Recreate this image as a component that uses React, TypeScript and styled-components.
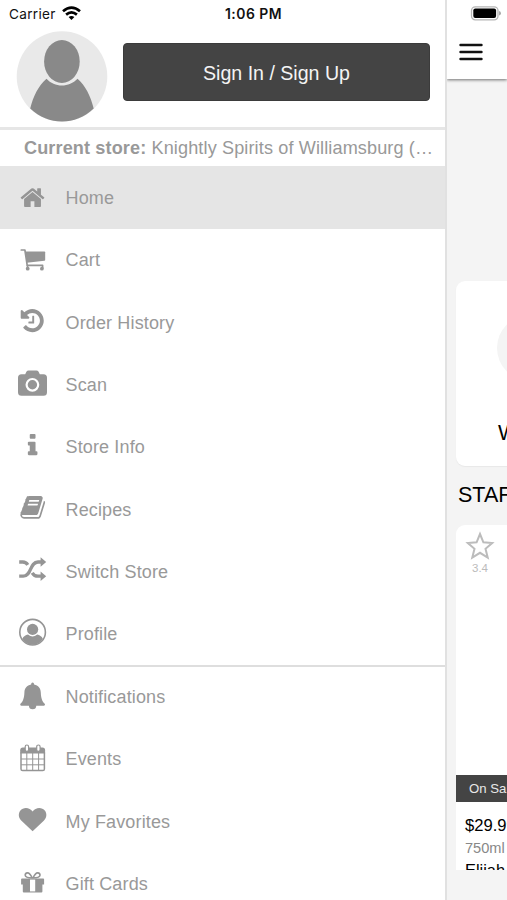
import React from "react";
import styled, { createGlobalStyle } from "styled-components";

const GlobalStyle = createGlobalStyle`
  * { box-sizing: border-box; }
  body { margin: 0; background: #fff; overflow: hidden; }
`;

const Screen = styled.div`
  width: 507px;
  height: 900px;
  display: grid;
  grid-template-columns: 445px 62px;
  overflow: hidden;
  font-family: "Liberation Sans", Arial, sans-serif;
`;

const Drawer = styled.aside`
  display: flex;
  flex-direction: column;
  height: 900px;
  overflow: hidden;
  background: #fff;
`;

const StatusBar = styled.div`
  display: grid;
  grid-template-columns: 216px 1fr;
  align-items: center;
  height: 27px;
  padding-left: 9px;
  flex: none;
  font-family: Inter, sans-serif;
  color: #111;
`;

const Carrier = styled.div`
  display: flex;
  align-items: center;
  gap: 6px;
  font-size: 13.6px;
  letter-spacing: 0.3px;
`;

const Clock = styled.div`
  font-size: 13.9px;
  font-weight: 600;
  letter-spacing: 0.5px;
`;

const Account = styled.div`
  display: flex;
  height: 100px;
  flex: none;
  padding: 4px 15px 0 16px;
  gap: 15px;
`;

const SignIn = styled.button`
  width: 307px;
  height: 58px;
  margin-top: 12px;
  padding: 2px 0 0;
  border: 1px solid #3b3b3b;
  border-radius: 4px;
  background: #444;
  color: #f4f4f4;
  font: 19.6px "Liberation Sans", Arial, sans-serif;
`;

const Store = styled.div`
  height: 39px;
  flex: none;
  border-top: 3px solid #e6e6e6;
  padding: 0 8px 0 24px;
  line-height: 36px;
  font-size: 18.1px;
  letter-spacing: 0.12px;
  color: #999;
  white-space: nowrap;
  overflow: hidden;
`;

const Menu = styled.nav<{ $divided?: boolean }>`
  display: flex;
  flex-direction: column;
  flex: none;
  border-top: ${(p) => (p.$divided ? "2px solid #dedede" : "none")};
  & > :first-child {
    margin-top: ${(p) => (p.$divided ? "-1.4px" : "0")};
  }
`;

const MenuRow = styled.a<{ $active?: boolean }>`
  display: flex;
  align-items: center;
  height: ${(p) => (p.$active ? "63px" : "62.3px")};
  padding-left: 16px;
  gap: 17.5px;
  font-size: 18px;
  letter-spacing: 0.14px;
  color: #999;
  background: ${(p) => (p.$active ? "#e5e5e5" : "transparent")};
`;

const Label = styled.span`
  padding-top: 1.6px;
`;

const Icon = styled.svg`
  width: 32px;
  height: 32px;
  flex: none;
  fill: #959595;
`;

const Page = styled.main`
  height: 900px;
  overflow: hidden;
  background: #f4f4f4;
  border-left: 2px solid #e1e1e1;
  white-space: nowrap;
  color: #111;
`;

const TopBar = styled.header`
  height: 79px;
  background: #fff;
  box-shadow: 0 1px 3px rgba(0, 0, 0, 0.55);
  display: flex;
  flex-direction: column;
  align-items: flex-start;
`;

const BatteryIcon = styled.svg`
  width: 31px;
  height: 15px;
  margin: 6px 0 0 23px;
`;

const MenuIcon = styled.svg`
  width: 24px;
  height: 18px;
  margin: 22px 0 0 12px;
`;

const Tile = styled.section`
  width: 110px;
  height: 185px;
  margin: 202px 0 0 9px;
  padding: 34px 0 0 41px;
  background: #fff;
  border-radius: 9px;
  box-shadow: 0 1px 1px #e8e8e8;
`;

const TileCircle = styled.div`
  width: 66px;
  height: 66px;
  border-radius: 50%;
  background: #f4f4f4;
`;

const TileLabel = styled.div`
  margin-top: 40px;
  padding-left: 1px;
  font-size: 21.5px;
  line-height: 24px;
  color: #000;
`;

const Heading = styled.h2`
  margin: 16px 0 0 11px;
  font-size: 21.5px;
  line-height: 26px;
  font-weight: 400;
  color: #000;
`;

const Product = styled.article`
  width: 180px;
  height: 345px;
  margin: 17px 0 0 9px;
  overflow: hidden;
  background: #fff;
  border-radius: 9px 9px 0 0;
  display: flex;
  flex-direction: column;
`;

const Rating = styled.div`
  width: 30px;
  height: 250px;
  flex: none;
  margin-left: 9px;
  padding-top: 6px;
  text-align: center;
  font-size: 11.5px;
  line-height: 14px;
  color: #bbb;
  svg { display: block; }
`;

const Badge = styled.div`
  height: 27px;
  flex: none;
  padding-left: 13px;
  background: #444;
  color: #e8e8e8;
  font-size: 13.2px;
  line-height: 28px;
`;

const Details = styled.div`
  flex: none;
  padding: 13px 0 0 9px;
`;

const Price = styled.div`
  font-size: 16.6px;
  line-height: 22px;
  color: #000;
`;

const Volume = styled.div`
  font-size: 14.6px;
  line-height: 23px;
  color: #888;
`;

const Name = styled.div`
  font-size: 16.4px;
  line-height: 20px;
  color: #000;
`;

const HomeGlyph = () => (
  <path transform="translate(3.4 2.5) scale(.01464)" d="M1472 992v480q0 26-19 45t-45 19h-384v-384h-256v384h-384q-26 0-45-19t-19-45v-480q0-1 .5-3t.5-3l575-474 575 474q1 2 1 6zm223-69l-62 74q-8 9-21 11h-3q-13 0-21-7l-692-577-692 577q-12 8-24 7-13-2-21-11l-62-74q-8-10-7-23.5t11-21.5l719-599q32-26 76-26t76 26l244 204v-195q0-14 9-23t23-9h192q14 0 23 9t9 23v408l219 182q10 8 11 21.5t-7 23.5z" />
);

const CartGlyph = () => (
  <>
    <path d="M9.3 7.4H28.4q.8 0 .8.8V15.8q0 .8-.8.9L10.8 18.8Z" />
    <path d="M5.3 6H8.9L11.2 21.3H26.6V24" fill="none" stroke="#959595" strokeWidth="1.7" strokeLinecap="round" strokeLinejoin="round" />
    <path d="M11.5 21V24" fill="none" stroke="#959595" strokeWidth="1.7" />
    <circle cx="11.7" cy="24.7" r="1.9" />
    <circle cx="25.9" cy="24.7" r="1.9" />
  </>
);

const HistoryGlyph = () => (
  <path transform="translate(2.8 1.2) scale(.015)" d="M1664 896q0 156-61 298t-164 245-245 164-298 61q-172 0-327-72.5t-264-204.5q-7-10-6.5-22.5t8.5-20.5l137-138q10-9 25-9 16 2 23 12 73 95 179 147t225 52q104 0 198.5-40.5t163.5-109.5 109.5-163.5 40.5-198.5-40.5-198.5-109.5-163.5-163.5-109.5-198.5-40.5q-98 0-188 35.5t-160 101.5l137 138q31 30 14 69-17 40-59 40h-448q-26 0-45-19t-19-45v-448q0-42 40-59 39-17 69 14l130 129q107-101 244.5-156.5t284.5-55.5q156 0 298 61t245 164 164 245 61 298zm-640-288v448q0 14-9 23t-23 9h-320q-14 0-23-9t-9-23v-64q0-14 9-23t23-9h224v-352q0-14 9-23t23-9h64q14 0 23 9t9 23z" />
);

const CameraGlyph = () => (
  <>
    <path d="M5.5 5.2H9.2L10.4 2.8Q11.1 1.4 12.7 1.4H20.3Q21.9 1.4 22.6 2.8L23.8 5.2H27.5Q31 5.2 31 8.7V23.2Q31 26.7 27.5 26.7H5.5Q2 26.7 2 23.2V8.7Q2 5.2 5.5 5.2Z" />
    <circle cx="16.4" cy="15.8" r="5.8" fill="none" stroke="#fff" strokeWidth="2.2" />
  </>
);

const InfoGlyph = () => (
  <path transform="translate(3.2 1.1) scale(.015)" d="M1216 1344v128q0 26-19 45t-45 19h-512q-26 0-45-19t-19-45v-128q0-26 19-45t45-19h64v-384h-64q-26 0-45-19t-19-45v-128q0-26 19-45t45-19h384q26 0 45 19t19 45v576h64q26 0 45 19t19 45zm-128-1152v192q0 26-19 45t-45 19h-256q-26 0-45-19t-19-45v-192q0-26 19-45t45-19h256q26 0 45 19t19 45z" />
);

const BookGlyph = () => (
  <path transform="translate(3.4 1.2) scale(.01485 .0148)" d="M1703 478q40 57 18 129l-275 906q-19 64-76.5 107.5t-122.5 43.5h-923q-77 0-148.5-53.5t-99.5-131.5q-24-67-2-127 0-4 3-27t4-37q1-8-3-21.5t-3-19.5q2-11 8-21t16.5-23.5 16.5-23.5q23-38 45-91.5t30-91.5q3-10 .5-30t-.5-28q3-11 17-28t17-23q21-36 42-92t25-90q1-9-2.5-32t.5-28q4-13 22-30.5t22-22.5q19-26 42.5-84.5t27.5-96.5q1-8-3-25.5t-2-26.5q2-8 9-18t18-23 17-21q8-12 16.5-30.5t15-35 16-36 19.5-32 26.5-23.5 36-11.5 47.5 5.5l-1 3q38-9 51-9h761q74 0 114 56t18 130l-274 906q-36 119-71.5 153.5t-128.5 34.5h-869q-27 0-38 15-11 16-1 43 24 70 144 70h923q29 0 56-15.5t35-41.5l300-987q7-22 5-57 38 15 59 43zm-1064 2q-4 13 2 22.5t20 9.5h608q13 0 25.5-9.5t16.5-22.5l21-64q4-13-2-22.5t-20-9.5h-608q-13 0-25.5 9.5t-16.5 22.5zm-83 256q-4 13 2 22.5t20 9.5h608q13 0 25.5-9.5t16.5-22.5l21-64q4-13-2-22.5t-20-9.5h-608q-13 0-25.5 9.5t-16.5 22.5z" />
);

const ShuffleGlyph = () => (
  <>
    <path d="M3.2 20.2H7.2C15.8 20.2 13.4 6 22 6H25.5M3.2 6H6.8Q10 6 11.8 8.9M16.2 16.8Q18.2 20.2 22 20.2H25.5" fill="none" stroke="#959595" strokeWidth="3.3" />
    <path d="M24.6 1.2L30.2 6L24.6 10.8ZM24.6 15.4L30.2 20.2L24.6 25Z" />
  </>
);

const ProfileGlyph = () => (
  <>
    <circle cx="16.6" cy="14.2" r="12.8" fill="none" stroke="#959595" strokeWidth="1.6" />
    <circle cx="16.6" cy="11.4" r="5.6" />
    <path d="M6.3 20.8Q8.2 17.3 12 16.6Q16.6 20.3 21.2 16.6Q25 17.3 26.9 20.8Q23.3 26.8 16.6 26.8T6.3 20.8Z" />
  </>
);

const BellGlyph = () => (
  <path d="M15.1 3.6Q15.1 1.6 16.6 1.6T18.1 3.6C22.4 4.4 24.6 7.2 24.8 11.5C25 17 26 20.4 29 23.1Q29.2 24.6 27.9 24.7H20.3Q20.1 28.2 16.6 28.2T12.9 24.7H5.3Q4 24.6 4.2 23.1C7.2 20.4 8.2 17 8.4 11.5C8.6 7.2 10.8 4.4 15.1 3.6Z" />
);

const CalendarGlyph = () => (
  <>
    <path d="M4.2 7.2Q4.2 4.4 6.8 4.4H26.5Q29.1 4.4 29.1 7.2V10.4H4.2Z" />
    <path d="M5 9.5V26Q5 27.6 6.6 27.6H26.8Q28.4 27.6 28.4 26V9.5" fill="none" stroke="#959595" strokeWidth="1.5" />
    <path d="M10.8 10V27.6M16.7 10V27.6M22.6 10V27.6M5 16H28.4M5 21.8H28.4" fill="none" stroke="#959595" strokeWidth="1" />
    <rect x="9.2" y="2" width="3.4" height="6.4" rx="1.7" fill="#fff" stroke="#959595" strokeWidth="1.2" />
    <rect x="20.7" y="2" width="3.4" height="6.4" rx="1.7" fill="#fff" stroke="#959595" strokeWidth="1.2" />
  </>
);

const HeartGlyph = () => (
  <path d="M16.6 26.2L5.2 15.4C2.2 12.4 2.3 8.2 4.2 5.7C7.4 1.8 13.6 2.2 16.6 6.5C19.6 2.2 25.8 1.8 29 5.7C30.9 8.2 31 12.4 28 15.4Z" />
);

const GiftGlyph = () => (
  <>
    <path d="M6 10.4H27.2Q28.1 10.4 28.1 11.3V16.5H26.4V23.6Q26.4 24.6 25.4 24.6H7.8Q6.8 24.6 6.8 23.6V16.5H5.1V11.3Q5.1 10.4 6 10.4Z" />
    <rect x="14" y="11.6" width="5.2" height="11.8" fill="#fff" />
    <path d="M16.2 10Q13.8 4.7 11.4 4.9Q9.1 5.1 9.2 7.3Q9.4 9.8 16.2 10ZM17 10Q19.4 4.7 21.8 4.9Q24.1 5.1 24 7.3Q23.8 9.8 17 10Z" fill="none" stroke="#959595" strokeWidth="1.6" />
  </>
);

const primary = [
  { label: "Home", Glyph: HomeGlyph, active: true },
  { label: "Cart", Glyph: CartGlyph },
  { label: "Order History", Glyph: HistoryGlyph },
  { label: "Scan", Glyph: CameraGlyph },
  { label: "Store Info", Glyph: InfoGlyph },
  { label: "Recipes", Glyph: BookGlyph },
  { label: "Switch Store", Glyph: ShuffleGlyph },
  { label: "Profile", Glyph: ProfileGlyph },
];

const secondary = [
  { label: "Notifications", Glyph: BellGlyph },
  { label: "Events", Glyph: CalendarGlyph },
  { label: "My Favorites", Glyph: HeartGlyph },
  { label: "Gift Cards", Glyph: GiftGlyph },
];

type Entry = { label: string; Glyph: () => React.JSX.Element; active?: boolean };

const renderRow = ({ label, Glyph, active }: Entry) => (
  <MenuRow key={label} $active={active}>
    <Icon viewBox="0 0 32 32"><Glyph /></Icon>
    <Label>{label}</Label>
  </MenuRow>
);

export default function App() {
  return (
    <>
      <GlobalStyle />
      <Screen>
        <Drawer>
          <StatusBar>
            <Carrier>
              Carrier
              <svg width="19" height="15" viewBox="0 0 19 15" fill="none" stroke="#000" strokeWidth="2.7">
                <path d="M1 5.2Q9.5-2 18 5.2M4.1 8.6Q9.5 4.1 14.9 8.6" />
                <path d="M6.6 11.1Q9.5 8.7 12.4 11.1L9.5 14Z" fill="#000" stroke="none" />
              </svg>
            </Carrier>
            <Clock>1:06 PM</Clock>
          </StatusBar>
          <Account>
            <svg width="92" height="92" viewBox="0 0 92 92">
              <circle cx="46" cy="45.5" r="45.3" fill="#e9e9e9" />
              <path d="M14.2 77.5C17.3 65 22.5 54.7 30.5 47.7C38.5 56.7 53.2 56.7 61.5 47.7C69.5 54.7 74.6 65 77.7 77.5C59.5 94.9 32.5 94.9 14.2 77.5Z" fill="#898989" />
              <ellipse cx="45.9" cy="30.5" rx="17.8" ry="21.5" fill="#898989" />
            </svg>
            <SignIn>Sign In / Sign Up</SignIn>
          </Account>
          <Store><b>Current store:</b> Knightly Spirits of Williamsburg (…</Store>
          <Menu>{primary.map(renderRow)}</Menu>
          <Menu $divided>{secondary.map(renderRow)}</Menu>
        </Drawer>
        <Page>
          <TopBar>
            <BatteryIcon viewBox="0 0 31 15">
              <rect x="1.5" y=".8" width="26.5" height="13" rx="3.8" fill="#fff" stroke="#b5b5b5" strokeWidth="1.3" />
              <rect x="3.3" y="2.6" width="22.8" height="9.4" rx="2" />
              <path d="M29 5Q31 5.3 31 7.3T29 9.6Z" fill="#aaa" />
            </BatteryIcon>
            <MenuIcon viewBox="0 0 24 18" stroke="#111" strokeWidth="2.4" strokeLinecap="round">
              <path d="M1.5 2H22.5M1.5 9H22.5M1.5 16H22.5" />
            </MenuIcon>
          </TopBar>
          <Tile>
            <TileCircle />
            <TileLabel>W</TileLabel>
          </Tile>
          <Heading>STAF</Heading>
          <Product>
            <Rating>
              <svg width="30" height="30" viewBox="0 0 30 30">
                <path d="M15 3L18.4 11.3L27.2 12L20.5 17.8L22.7 26.6L15 21.8L7.3 26.6L9.5 17.8L2.8 12L11.6 11.3Z" fill="none" stroke="#bcbcbc" strokeWidth="2" />
              </svg>
              3.4
            </Rating>
            <Badge>On Sale</Badge>
            <Details>
              <Price>$29.99</Price>
              <Volume>750ml</Volume>
              <Name>Elijah</Name>
            </Details>
          </Product>
        </Page>
      </Screen>
    </>
  );
}
